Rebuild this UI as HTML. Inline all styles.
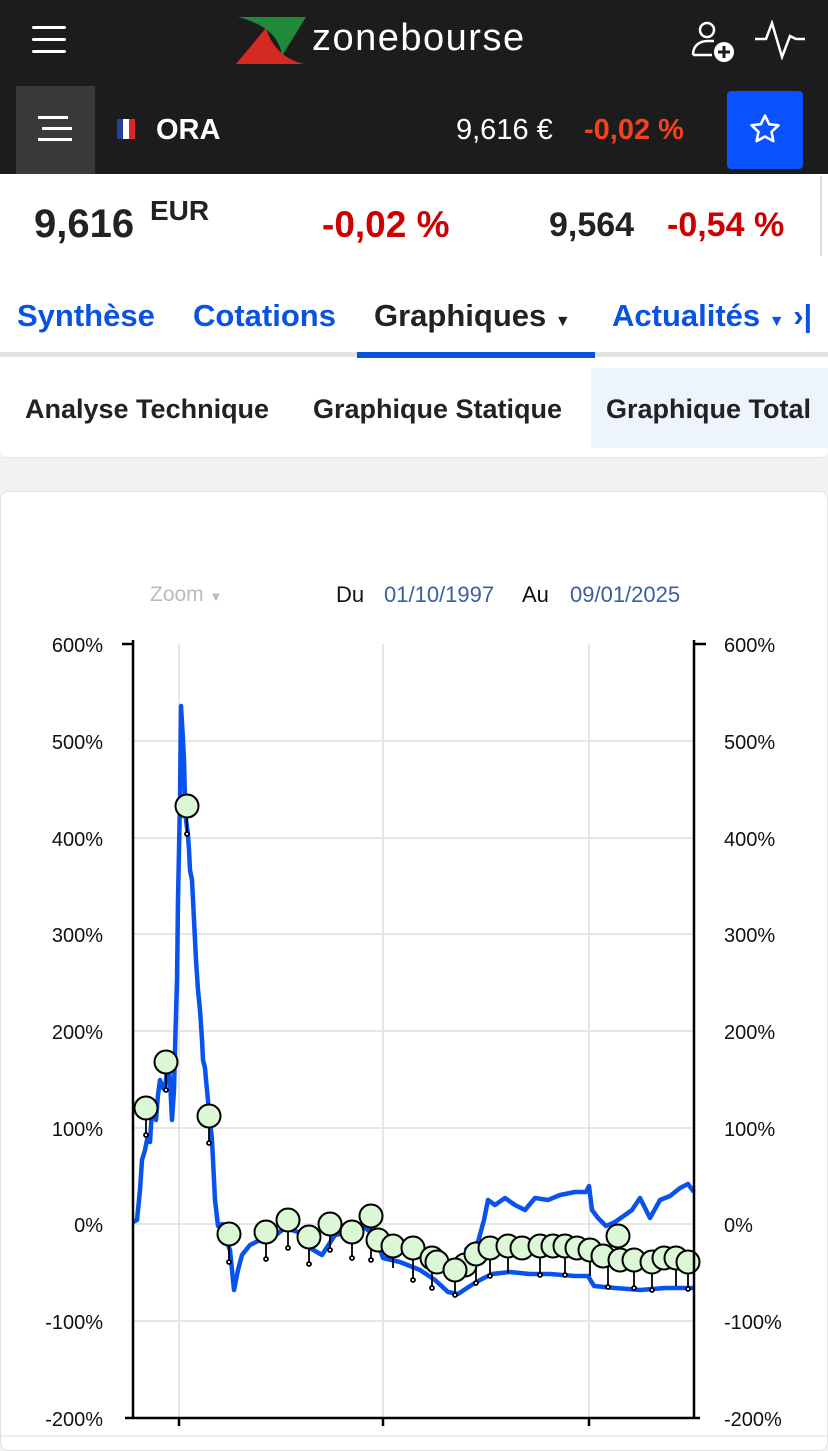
<!DOCTYPE html>
<html><head><meta charset="utf-8"><style>
*{margin:0;padding:0;box-sizing:border-box}
body{width:828px;height:1448px;overflow:hidden;background:#f2f2f2;font-family:"Liberation Sans",sans-serif;position:relative}
.a{position:absolute;white-space:nowrap}
</style></head><body>
<div class="a" style="left:0;top:0;width:828px;height:174px;background:#1c1c1c"></div>
<div class="a" style="left:32px;top:26px;width:34px;height:3px;background:#fff;border-radius:2px"></div>
<div class="a" style="left:32px;top:38px;width:34px;height:3px;background:#fff;border-radius:2px"></div>
<div class="a" style="left:32px;top:50px;width:34px;height:3px;background:#fff;border-radius:2px"></div>
<svg class="a" style="left:236px;top:16px" width="72" height="50" viewBox="0 0 72 50">
<path d="M2 1 L70 1 L46 40 C44 22 30 8 2 1Z" fill="#1f8a3a"/>
<path d="M0 48 L68 48 C50 44 36 32 30 12 Z" fill="#d42a22"/>
</svg>
<div class="a" style="left:312px;top:17px;font-size:38px;color:#fff;letter-spacing:1.5px">zonebourse</div>
<svg class="a" style="left:690px;top:20px" width="48" height="44" viewBox="0 0 48 44" fill="none" stroke="#fff" stroke-width="2.5">
<circle cx="17" cy="10" r="7"/><path d="M3 35 C3 25 10 21 18 21 L24 21"/><path d="M3 35 L22 35"/>
<circle cx="34" cy="32" r="10" fill="#fff" stroke="none"/><path d="M34 26v12M28 32h12" stroke="#1c1c1c" stroke-width="3"/>
</svg>
<svg class="a" style="left:754px;top:20px" width="52" height="40" viewBox="0 0 52 40" fill="none" stroke="#fff" stroke-width="2.5">
<path d="M1 19 H12 L18 3 L28 37 L36 16 L42 19 H51"/>
</svg>
<div class="a" style="left:16px;top:86px;width:79px;height:88px;background:#3a3a3a"></div>
<div class="a" style="left:38px;top:116px;width:30px;height:3px;background:#fff"></div>
<div class="a" style="left:42px;top:127px;width:30px;height:3px;background:#fff"></div>
<div class="a" style="left:38px;top:138px;width:34px;height:3px;background:#fff"></div>
<div class="a" style="left:117px;top:119px;width:6px;height:20px;background:#2340a0"></div>
<div class="a" style="left:123px;top:119px;width:6px;height:20px;background:#fff"></div>
<div class="a" style="left:129px;top:119px;width:6px;height:20px;background:#d62828"></div>
<div class="a" style="left:156px;top:114px;font-size:29px;font-weight:bold;color:#fff">ORA</div>
<div class="a" style="left:456px;top:114px;font-size:29px;color:#fff">9,616 €</div>
<div class="a" style="left:584px;top:114px;font-size:29px;font-weight:bold;color:#f4411e">-0,02 %</div>
<div class="a" style="left:727px;top:91px;width:76px;height:78px;background:#0a52ff;border-radius:4px"></div>
<svg class="a" style="left:748px;top:112px" width="34" height="34" viewBox="0 0 24 24" fill="none" stroke="#fff" stroke-width="1.8" stroke-linejoin="round"><path d="M12 2.5l2.9 6.1 6.6.8-4.9 4.6 1.3 6.6L12 17.3l-5.9 3.3 1.3-6.6L2.5 9.4l6.6-.8z"/></svg>
<div class="a" style="left:0;top:174px;width:828px;height:184px;background:#fff"></div>
<div class="a" style="left:34px;top:202px;font-size:40px;font-weight:bold;color:#222">9,616</div>
<div class="a" style="left:150px;top:195px;font-size:28px;font-weight:bold;color:#222">EUR</div>
<div class="a" style="left:322px;top:204px;font-size:37px;font-weight:bold;color:#c00">-0,02 %</div>
<div class="a" style="left:549px;top:206px;font-size:34px;font-weight:bold;color:#222">9,564</div>
<div class="a" style="left:667px;top:206px;font-size:34px;font-weight:bold;color:#c00">-0,54 %</div>
<div class="a" style="left:820px;top:176px;width:2px;height:80px;background:#ddd"></div>
<div class="a" style="left:17px;top:298px;font-size:31px;font-weight:bold;color:#0a52e0">Synthèse</div>
<div class="a" style="left:193px;top:298px;font-size:31px;font-weight:bold;color:#0a52e0">Cotations</div>
<div class="a" style="left:374px;top:298px;font-size:31px;font-weight:bold;color:#222">Graphiques <span style="font-size:16px">▼</span></div>
<div class="a" style="left:612px;top:298px;font-size:31px;font-weight:bold;color:#0a52e0">Actualités <span style="font-size:16px">▼</span> ›|</div>
<div class="a" style="left:0;top:352px;width:828px;height:5px;background:#e2e2e2"></div>
<div class="a" style="left:357px;top:352px;width:238px;height:6px;background:#0a52e0"></div>
<div class="a" style="left:0;top:358px;width:828px;height:100px;background:#fff;border-radius:0 0 6px 6px;border-bottom:1px solid #e4e4e4"></div>
<div class="a" style="left:591px;top:368px;width:237px;height:80px;background:#eef4fb"></div>
<div class="a" style="left:25px;top:394px;font-size:27px;font-weight:bold;color:#222">Analyse Technique</div>
<div class="a" style="left:313px;top:394px;font-size:27px;font-weight:bold;color:#222">Graphique Statique</div>
<div class="a" style="left:606px;top:394px;font-size:27px;font-weight:bold;color:#222">Graphique Total</div>
<div class="a" style="left:0;top:491px;width:828px;height:960px;background:#fff;border:1px solid #e2e2e2;border-radius:8px"></div>
<div class="a" style="left:150px;top:583px;font-size:21px;color:#bbb">Zoom <span style="font-size:13px">▼</span></div>
<div class="a" style="left:336px;top:582px;font-size:22px;color:#111">Du</div>
<div class="a" style="left:384px;top:582px;font-size:22px;color:#3a5fa0">01/10/1997</div>
<div class="a" style="left:522px;top:582px;font-size:22px;color:#111">Au</div>
<div class="a" style="left:570px;top:582px;font-size:22px;color:#3a5fa0">09/01/2025</div>
<svg class="a" style="left:0;top:620px" width="828" height="828" viewBox="0 620 828 828" font-family="Liberation Sans" font-size="20" fill="#111">
<g stroke="#e6e6e6" stroke-width="2">
<line x1="133" x2="694" y1="741" y2="741"/><line x1="133" x2="694" y1="838" y2="838"/><line x1="133" x2="694" y1="934" y2="934"/><line x1="133" x2="694" y1="1031" y2="1031"/><line x1="133" x2="694" y1="1128" y2="1128"/><line x1="133" x2="694" y1="1224" y2="1224"/><line x1="133" x2="694" y1="1321" y2="1321"/>
<line x1="179" x2="179" y1="644" y2="1418"/><line x1="383" x2="383" y1="644" y2="1418"/><line x1="589" x2="589" y1="644" y2="1418"/>
</g>
<g text-anchor="end"><text x="103" y="652">600%</text><text x="103" y="749">500%</text><text x="103" y="846">400%</text><text x="103" y="942">300%</text><text x="103" y="1039">200%</text><text x="103" y="1136">100%</text><text x="103" y="1232">0%</text><text x="103" y="1329">-100%</text><text x="103" y="1426">-200%</text></g>
<g><text x="724" y="652">600%</text><text x="724" y="749">500%</text><text x="724" y="846">400%</text><text x="724" y="942">300%</text><text x="724" y="1039">200%</text><text x="724" y="1136">100%</text><text x="724" y="1232">0%</text><text x="724" y="1329">-100%</text><text x="724" y="1426">-200%</text></g>
<g fill="none" stroke="#0a52ee" stroke-width="4.5" stroke-linejoin="round">
<polyline points="133,1222 137,1220 140,1190 142,1160 145,1150 148,1135 150,1142 152,1110 156,1120 158,1095 160,1080 163,1088 165,1090 168,1060 170,1080 172,1120 174,1090 175,1050 177,980 178,900 180,800 181,706 183,740 184,760 185,800 186,820 188,835 189,850 190,870 192,880 194,920 196,960 198,990 200,1010 202,1040 203,1060 205,1068 206,1080 208,1100 209,1120 211,1130 212,1140 214,1180 215,1200 218,1226 222,1224 226,1240 230,1250 234,1290 238,1270 242,1255 250,1245 260,1240 272,1238 285,1228 298,1232 310,1248 322,1255 335,1235 350,1232 365,1228 375,1235 383,1258 400,1262 420,1270 435,1280 448,1292 458,1294 470,1286 480,1280 492,1274 510,1272 530,1274 550,1274 575,1276 588,1276 594,1286 615,1288 640,1290 665,1288 694,1288"/>
<polyline points="465,1250 478,1242 484,1220 488,1200 495,1205 505,1198 515,1205 525,1210 535,1198 548,1200 560,1195 575,1192 586,1192 589,1186 592,1210 598,1218 606,1226 615,1222 625,1215 632,1210 640,1198 650,1218 660,1200 670,1196 680,1188 688,1184 694,1192"/>
</g>
<g stroke="#000" stroke-width="1.8" fill="#fff">
<line x1="146" y1="1108" x2="146" y2="1135"/><line x1="166" y1="1062" x2="166" y2="1090"/><line x1="187" y1="806" x2="187" y2="834"/><line x1="209" y1="1116" x2="209" y2="1143"/><line x1="229" y1="1234" x2="229" y2="1262"/><line x1="266" y1="1232" x2="266" y2="1259"/><line x1="288" y1="1220" x2="288" y2="1248"/><line x1="309" y1="1237" x2="309" y2="1264"/><line x1="330" y1="1224" x2="330" y2="1250"/><line x1="352" y1="1232" x2="352" y2="1258"/><line x1="371" y1="1216" x2="371" y2="1260"/><line x1="393" y1="1246" x2="393" y2="1268"/><line x1="413" y1="1248" x2="413" y2="1280"/><line x1="432" y1="1258" x2="432" y2="1288"/><line x1="455" y1="1270" x2="455" y2="1295"/><line x1="476" y1="1254" x2="476" y2="1283"/><line x1="490" y1="1248" x2="490" y2="1276"/><line x1="508" y1="1246" x2="508" y2="1273"/><line x1="540" y1="1246" x2="540" y2="1275"/><line x1="565" y1="1246" x2="565" y2="1275"/><line x1="590" y1="1250" x2="590" y2="1276"/><line x1="608" y1="1256" x2="608" y2="1287"/><line x1="634" y1="1260" x2="634" y2="1288"/><line x1="652" y1="1262" x2="652" y2="1290"/><line x1="676" y1="1258" x2="676" y2="1286"/><line x1="688" y1="1262" x2="688" y2="1289"/>
<circle cx="146" cy="1135" r="2"/><circle cx="166" cy="1090" r="2"/><circle cx="187" cy="834" r="2"/><circle cx="209" cy="1143" r="2"/><circle cx="229" cy="1262" r="2"/><circle cx="266" cy="1259" r="2"/><circle cx="288" cy="1248" r="2"/><circle cx="309" cy="1264" r="2"/><circle cx="330" cy="1250" r="2"/><circle cx="352" cy="1258" r="2"/><circle cx="371" cy="1260" r="2"/><circle cx="413" cy="1280" r="2"/><circle cx="432" cy="1288" r="2"/><circle cx="455" cy="1295" r="2"/><circle cx="476" cy="1283" r="2"/><circle cx="490" cy="1276" r="2"/><circle cx="540" cy="1275" r="2"/><circle cx="565" cy="1275" r="2"/><circle cx="608" cy="1287" r="2"/><circle cx="634" cy="1288" r="2"/><circle cx="652" cy="1290" r="2"/><circle cx="688" cy="1289" r="2"/>
</g>
<g fill="#dbf7d6" stroke="#000" stroke-width="2">
<circle cx="146" cy="1108" r="11.5"/><circle cx="166" cy="1062" r="11.5"/><circle cx="187" cy="806" r="11.5"/><circle cx="209" cy="1116" r="11.5"/><circle cx="229" cy="1234" r="11.5"/><circle cx="266" cy="1232" r="11.5"/><circle cx="288" cy="1220" r="11.5"/><circle cx="309" cy="1237" r="11.5"/><circle cx="330" cy="1224" r="11.5"/><circle cx="352" cy="1232" r="11.5"/><circle cx="371" cy="1216" r="11.5"/><circle cx="378" cy="1240" r="11.5"/><circle cx="393" cy="1246" r="11.5"/><circle cx="413" cy="1248" r="11.5"/><circle cx="432" cy="1258" r="11.5"/><circle cx="437" cy="1262" r="11.5"/><circle cx="465" cy="1265" r="11.5"/><circle cx="455" cy="1270" r="11.5"/><circle cx="476" cy="1254" r="11.5"/><circle cx="490" cy="1248" r="11.5"/><circle cx="508" cy="1246" r="11.5"/><circle cx="522" cy="1248" r="11.5"/><circle cx="540" cy="1246" r="11.5"/><circle cx="553" cy="1246" r="11.5"/><circle cx="565" cy="1246" r="11.5"/><circle cx="577" cy="1248" r="11.5"/><circle cx="590" cy="1250" r="11.5"/><circle cx="603" cy="1256" r="11.5"/><circle cx="618" cy="1236" r="11.5"/><circle cx="620" cy="1260" r="11.5"/><circle cx="634" cy="1260" r="11.5"/><circle cx="652" cy="1262" r="11.5"/><circle cx="664" cy="1258" r="11.5"/><circle cx="676" cy="1258" r="11.5"/><circle cx="688" cy="1262" r="11.5"/>
</g>
<g stroke="#000" stroke-width="2.5" fill="none">
<line x1="133" y1="640" x2="133" y2="1418"/><line x1="694" y1="640" x2="694" y2="1418"/><line x1="125" y1="1418" x2="700" y2="1418"/>
<line x1="179" y1="1418" x2="179" y2="1426"/><line x1="383" y1="1418" x2="383" y2="1426"/><line x1="589" y1="1418" x2="589" y2="1426"/>
<line x1="122" y1="644" x2="133" y2="644"/><line x1="694" y1="644" x2="706" y2="644"/>
</g>
<line x1="0" y1="1436" x2="828" y2="1436" stroke="#ddd" stroke-width="1"/>
</svg>
</body></html>
